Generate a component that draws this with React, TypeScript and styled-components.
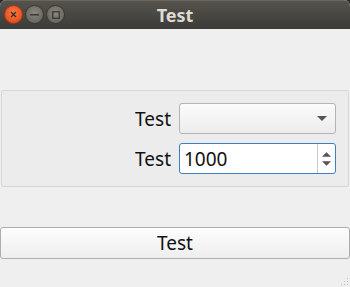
import React from 'react'
import styled, { createGlobalStyle } from 'styled-components'

const GlobalStyle = createGlobalStyle`
  html, body {
    margin: 0;
    padding: 0;
    background: #2b2b2b;
  }
  #root {
    width: 350px;
    height: 287px;
  }
`

const uiFont = `'Noto Sans', 'DejaVu Sans', sans-serif`

const Window = styled.div`
  display: flex;
  flex-direction: column;
  width: 350px;
  height: 287px;
  background: #efefef;
  font-family: ${uiFont};
  overflow: hidden;
  border-radius: 6px 6px 0 0;
`

const TitleBar = styled.div`
  position: relative;
  display: flex;
  align-items: center;
  justify-content: center;
  height: 29px;
  flex-shrink: 0;
  background: linear-gradient(#56534d, #3c3b37);
  border-top: 1px solid #6a665f;
  box-sizing: border-box;
`

const Title = styled.span`
  font-size: 18px;
  font-weight: bold;
  color: #dfdbd2;
  margin-top: -1px;
`

const Controls = styled.div`
  position: absolute;
  left: 4px;
  top: 4px;
  display: flex;
  gap: 2px;
`

const WinButton = styled.div<{ $close?: boolean }>`
  width: 19px;
  height: 19px;
  border-radius: 50%;
  display: flex;
  align-items: center;
  justify-content: center;
  box-sizing: border-box;
  border: 1px solid ${p => (p.$close ? '#a8361a' : '#3a3935')};
  background: ${p =>
    p.$close
      ? 'radial-gradient(circle at 50% 40%, #f77b4c, #e6521c 70%, #c9431a)'
      : 'radial-gradient(circle at 50% 40%, #8a8780, #6a6862 70%, #5a5852)'};
`

const Content = styled.div`
  flex: 1;
  display: flex;
  flex-direction: column;
  padding: 61px 0 0 0;
  position: relative;
`

const GroupBox = styled.div`
  margin: 0 1px 0 1px;
  height: 97px;
  box-sizing: border-box;
  border: 1px solid #d6d6d6;
  border-radius: 2px;
  background: #ececec;
  display: flex;
  flex-direction: column;
  align-items: flex-end;
  gap: 9px;
  padding: 12px 12px 0 0;
`

const FormRow = styled.div`
  display: flex;
  align-items: center;
  gap: 8px;
`

const Label = styled.span`
  font-size: 19px;
  line-height: 22px;
  color: #111;
`

const Field = styled.div<{ $focus?: boolean }>`
  position: relative;
  width: 157px;
  height: 31px;
  box-sizing: border-box;
  border-radius: 3px;
  border: 1px solid ${p => (p.$focus ? '#3d7fc1' : '#b4b4b4')};
  background: ${p => (p.$focus ? '#ffffff' : 'linear-gradient(#fbfbfb, #ececec)')};
  display: flex;
  align-items: center;
`

const ComboArrow = styled.div`
  position: absolute;
  right: 8px;
  top: 0;
  bottom: 0;
  display: flex;
  align-items: center;
`

const SpinText = styled.span`
  font-size: 19px;
  line-height: 22px;
  color: #111;
  padding-left: 4px;
`

const SpinButtons = styled.div`
  position: absolute;
  right: 0;
  top: 0;
  bottom: 0;
  width: 17px;
  border-left: 1px solid #c8c8c8;
  display: flex;
  flex-direction: column;
  align-items: center;
  justify-content: center;
  gap: 4px;
`

const PushButton = styled.div`
  margin: 40px 0 0 0;
  height: 32px;
  box-sizing: border-box;
  border: 1px solid #adadad;
  border-radius: 3px;
  background: linear-gradient(#fdfdfd, #eeeeee);
  display: flex;
  align-items: center;
  justify-content: center;
  font-size: 19px;
  color: #111;
`

const Grip = styled.svg`
  position: absolute;
  right: 1px;
  bottom: 1px;
`

const Arrow = ({ down, size = 10 }: { down?: boolean; size?: number }) => (
  <svg width={size} height={Math.round(size / 2)} viewBox="0 0 10 5" style={{ display: 'block' }}>
    <path d={down ? 'M0 0 L10 0 L5 5 Z' : 'M0 5 L10 5 L5 0 Z'} fill="#555" />
  </svg>
)

const App: React.FC = () => {
  const dots = [
    [9, 1],
    [6, 4],
    [9, 4],
    [3, 7],
    [6, 7],
    [9, 7]
  ]
  return (
    <>
      <GlobalStyle />
      <Window>
        <TitleBar>
          <Controls>
            <WinButton $close>
              <svg width="7" height="7" viewBox="0 0 7 7">
                <path d="M1 1 L6 6 M6 1 L1 6" stroke="#3a2a20" strokeWidth="1.3" />
              </svg>
            </WinButton>
            <WinButton>
              <svg width="9" height="2" viewBox="0 0 9 2">
                <rect x="0" y="0" width="9" height="1.5" fill="#3a3935" />
              </svg>
            </WinButton>
            <WinButton>
              <svg width="8" height="8" viewBox="0 0 8 8">
                <rect x="0.75" y="0.75" width="6.5" height="6.5" fill="none" stroke="#3a3935" strokeWidth="1.3" />
              </svg>
            </WinButton>
          </Controls>
          <Title>Test</Title>
        </TitleBar>
        <Content>
          <GroupBox>
            <FormRow>
              <Label>Test</Label>
              <Field>
                <ComboArrow>
                  <Arrow down size={10} />
                </ComboArrow>
              </Field>
            </FormRow>
            <FormRow>
              <Label>Test</Label>
              <Field $focus>
                <SpinText>1000</SpinText>
                <SpinButtons>
                  <Arrow size={9} />
                  <Arrow down size={9} />
                </SpinButtons>
              </Field>
            </FormRow>
          </GroupBox>
          <PushButton>Test</PushButton>
          <Grip width="11" height="9" viewBox="0 0 11 9">
            {dots.map(([x, y]) => (
              <rect key={`${x}-${y}`} x={x} y={y} width="1" height="1" fill="#b8b8b8" />
            ))}
          </Grip>
        </Content>
      </Window>
    </>
  )
}

export default App
